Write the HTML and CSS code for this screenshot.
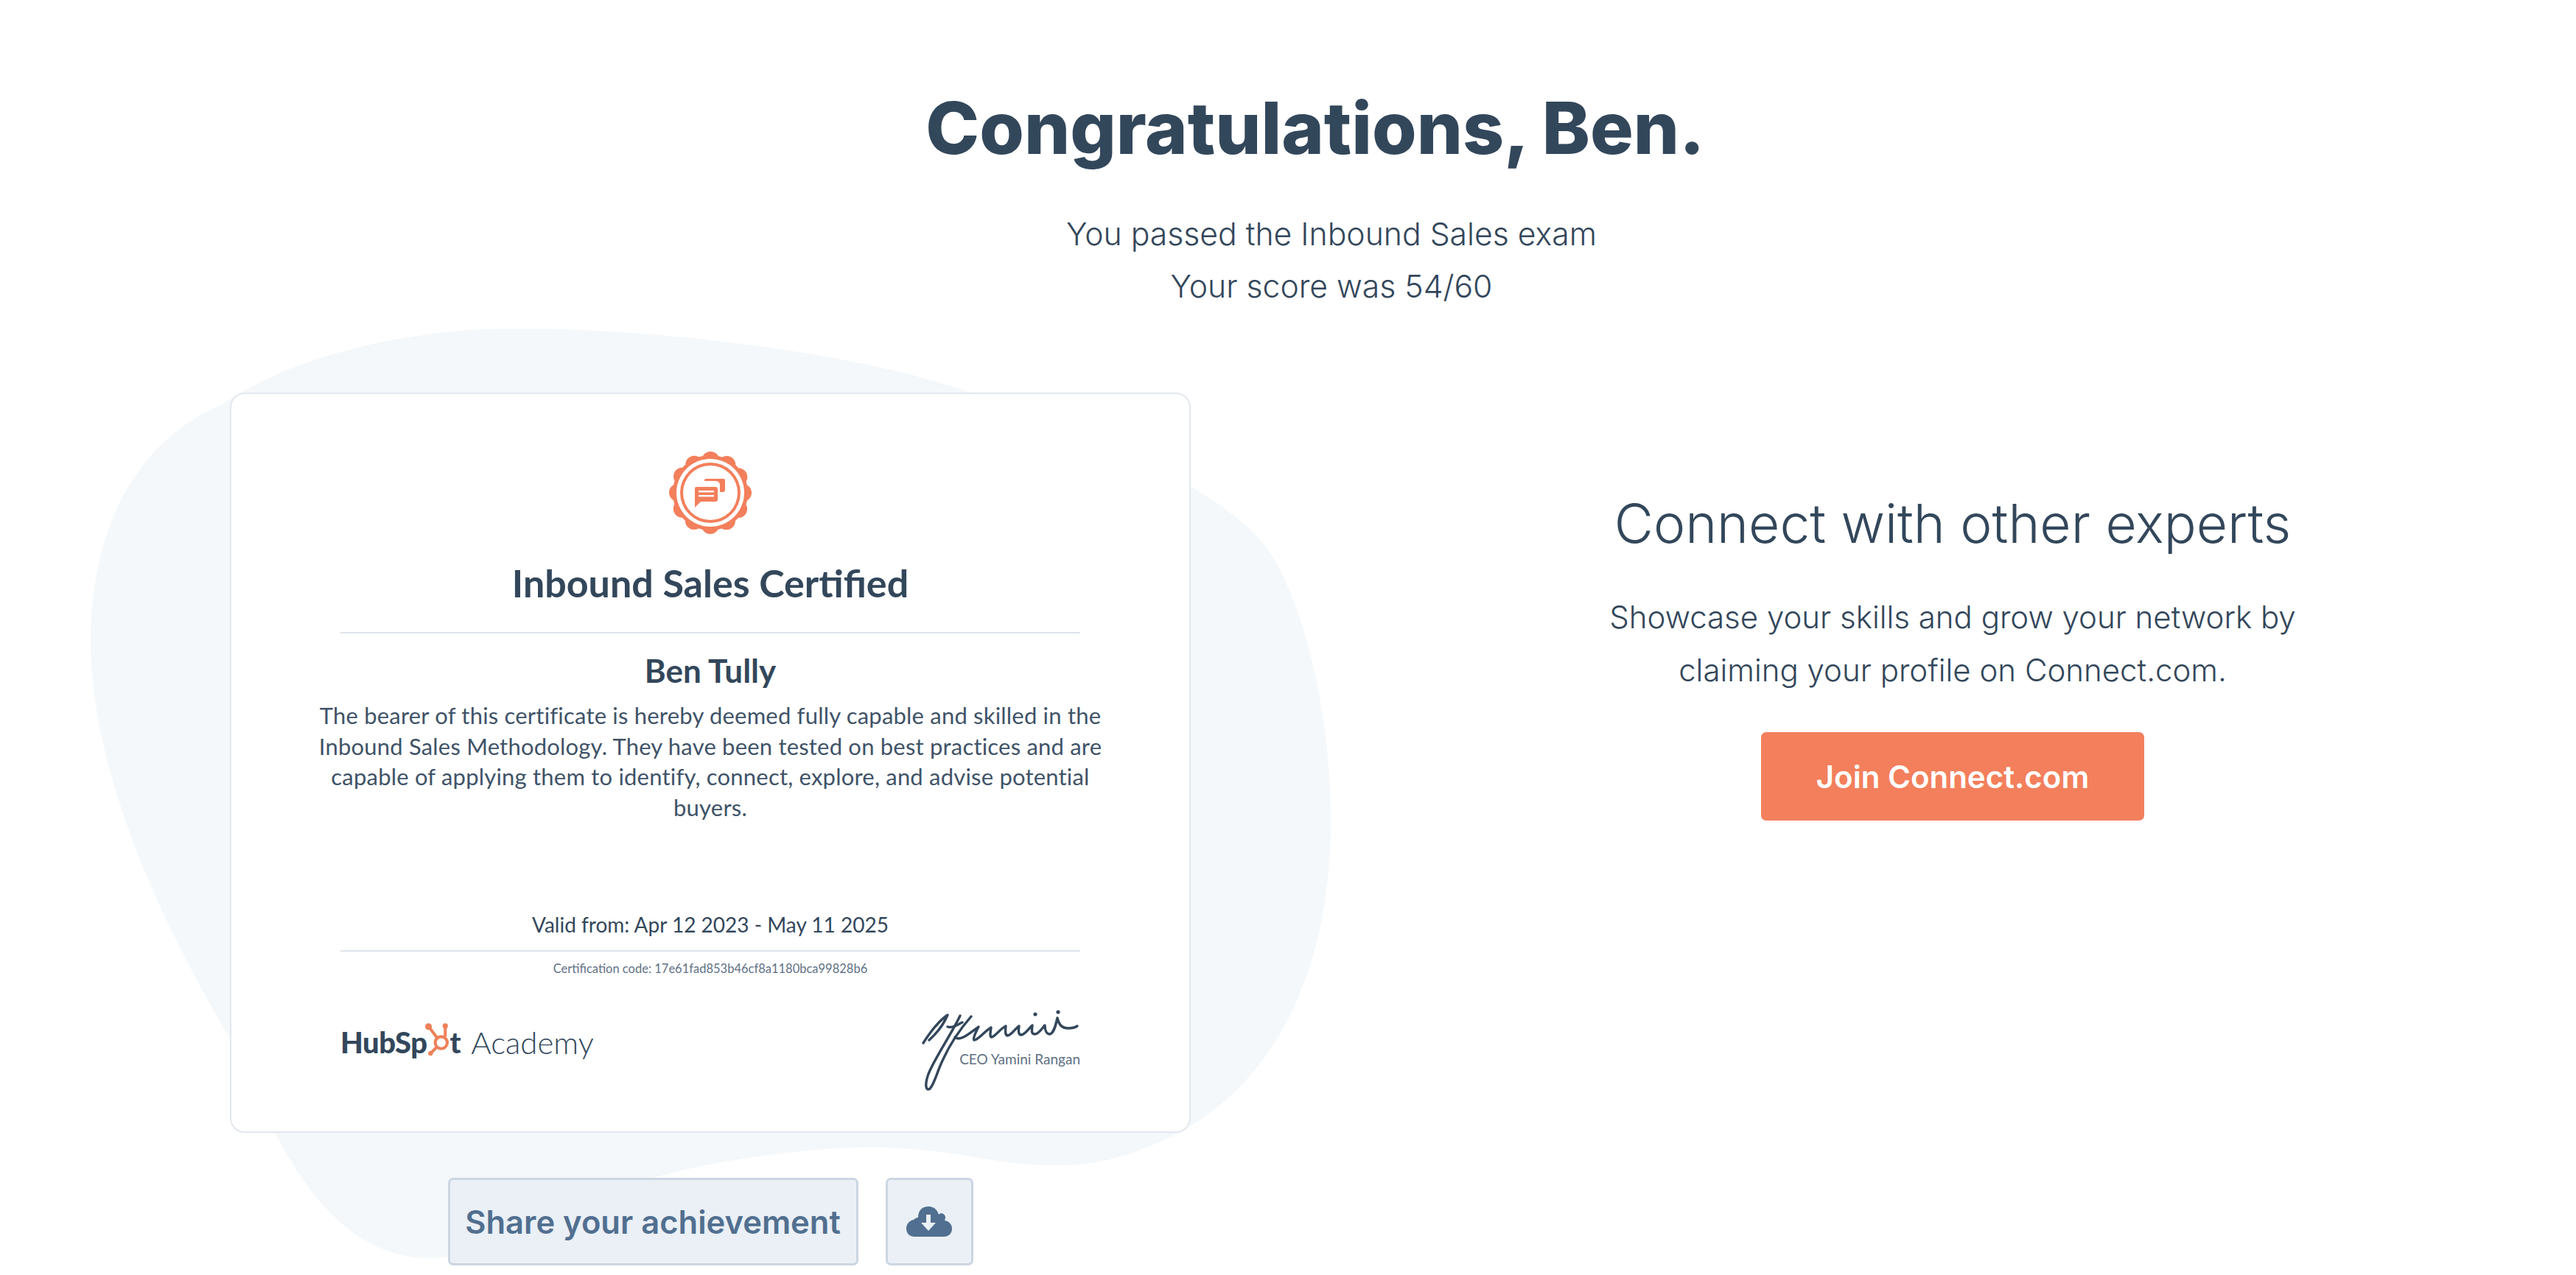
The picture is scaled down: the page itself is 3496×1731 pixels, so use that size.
FILE: index.html
```html
<!DOCTYPE html>
<html lang="en">
<head>
  <meta charset="UTF-8">
  <meta name="viewport" content="width=device-width, initial-scale=1.0">
  <title>Congratulations</title>
  <link rel="stylesheet" href="styles.css">
</head>
<body>
  <!-- mancha de fundo atras do certificado -->
  <svg class="blob" viewBox="0 0 1900 1731" aria-hidden="true">
    <path d="M700 446 C900 446 1170 480 1317 533 C1420 575 1540 615 1616 660 C1680 700 1720 730 1745 790 C1785 880 1806 1000 1806 1115 C1806 1330 1720 1500 1550 1560 C1480 1590 1400 1585 1330 1572 C1260 1560 1200 1555 1137 1559 C1080 1562 970 1575 891 1598 C800 1630 690 1708 582 1708 C470 1708 390 1600 330 1440 C220 1260 123 1050 123 870 C123 700 200 590 300 550 C400 480 560 446 700 446 Z"/>
  </svg>

  <header class="hero">
    <h1>Congratulations, Ben.</h1>
    <p>You passed the Inbound Sales exam</p>
    <p>Your score was 54/60</p>
  </header>

  <main class="columns">
    <section class="cert-col">
      <div class="card">
        <svg class="badge" viewBox="0 0 112 112" aria-hidden="true">
          <circle cx="56" cy="56" r="51" fill="#f37f5c"/>
          <circle class="badge-lobes" cx="56" cy="56" r="44"/>
          <circle cx="56" cy="56" r="46" fill="#fff"/>
          <circle cx="56" cy="56" r="41" fill="#f37f5c"/>
          <circle cx="56" cy="56" r="37" fill="#fff"/>
          <path fill="#f37f5c" d="M50 37 H74 Q76 37 76 39 V52 Q76 55 73 55 H69 V46 Q69 40 63 40 H48 Q48 37 50 37 Z"/>
          <path fill="#f37f5c" d="M37 48 H63 Q66 48 66 51 V65 Q66 68 63 68 H43 L35 76 V50 Q35 48 37 48 Z"/>
          <rect x="40" y="53" width="21" height="2.4" fill="#fff"/>
          <rect x="40" y="59" width="21" height="2.4" fill="#fff"/>
        </svg>
        <h2>Inbound Sales Certified</h2>
        <hr class="rule rule-top">
        <h3>Ben Tully</h3>
        <p class="cert-text">The bearer of this certificate is hereby deemed fully capable and skilled in the Inbound Sales Methodology. They have been tested on best practices and are capable of applying them to identify, connect, explore, and advise potential buyers.</p>
        <p class="valid">Valid from: Apr 12 2023 - May 11 2025</p>
        <hr class="rule rule-bottom">
        <p class="code">Certification code: 17e61fad853b46cf8a1180bca99828b6</p>
        <div class="card-foot">
          <div class="logo">
            <span class="logo-hub">HubSp</span><svg class="sprocket" viewBox="0 0 44 50" aria-hidden="true">
              <g fill="none" stroke="#ee8159" stroke-width="4.5">
                <circle cx="24" cy="30" r="9"/>
                <path d="M30 5 V21 M6 7 L18 23 M17 37 L9 45"/>
              </g>
              <g fill="#ee8159">
                <circle cx="5" cy="6" r="5"/>
                <circle cx="30" cy="5" r="4"/>
                <circle cx="8" cy="46" r="3.5"/>
              </g>
            </svg><span class="logo-hub logo-t">t</span>
            <span class="logo-academy">Academy</span>
          </div>
          <div class="signature">
            <svg viewBox="0 0 260 150" aria-hidden="true">
              <g fill="none" stroke="#33475b" stroke-width="3.4" stroke-linecap="round" stroke-linejoin="round">
                <path d="M25 66 C34 52 46 36 58 28 C52 42 42 54 33 62"/>
                <path d="M75 29 C62 56 42 84 32 108 C27 122 28 132 34 128 C40 122 44 104 52 88 C62 66 76 46 90 30"/>
                <path d="M58 44 C64 46 70 42 78 38"/>
                <path d="M68 58 C74 64 84 56 100 44 C96 52 92 60 94 62 C100 62 108 50 117 45 C116 52 115 58 118 58 C124 56 130 46 137 43 C136 50 136 56 140 56 C146 54 150 46 155 43 C154 50 154 55 158 55 C164 54 168 46 173 42 C172 50 172 54 176 54 C182 54 186 46 190 42 C190 48 192 54 197 54 C203 52 205 40 207 32 C209 40 212 46 222 46 C226 46 231 45 234 43"/>
              </g>
              <circle cx="177" cy="27" r="2.6" fill="#33475b"/>
              <circle cx="208" cy="24" r="2.6" fill="#33475b"/>
            </svg>
            <span class="sig-name">CEO Yamini Rangan</span>
          </div>
        </div>
      </div>
      <div class="cert-actions">
        <button class="btn-soft btn-share">Share your achievement</button>
        <button class="btn-soft btn-download" aria-label="Download">
          <svg viewBox="0 0 62 41" aria-hidden="true">
            <path fill="#516f90" d="M16 15 C16 5 22 0 30 0 C37 0 42 4 44 11 C46 8 52 9 53 14 C53 16 52.500 18 52 19 C58 20 62 24 62 30 C62 37 57 41 51 41 H11 C5 41 0 37 0 30 C0 24 4 19 10 18 C12 16 14 15 16 15 Z"/>
            <path fill="#eaf0f6" d="M27 11 H33 V22 H40 L30 33 L20 22 H27 Z"/>
          </svg>
        </button>
      </div>
    </section>

    <section class="connect">
      <h2>Connect with other experts</h2>
      <p>Showcase your skills and grow your network by claiming your profile on Connect.com.</p>
      <button class="btn-join">Join Connect.com</button>
    </section>
  </main>
</body>
</html>
```

FILE: styles.css
```css
* {
  box-sizing: border-box;
}

body {
  margin: 0;
  height: 1731px;
  overflow: hidden;
  position: relative;
  background: #fff;
  color: #33475b;
  font-family: Inter, "Open Sans", sans-serif;
}

.blob {
  position: absolute;
  top: 0;
  left: 0;
  width: 1900px;
  height: 1731px;
  fill: #f5f8fa;
}

.hero {
  position: relative;
  padding-top: 100px;
  text-align: center;
}

.hero h1 {
  margin: 0 0 34px;
  padding-left: 74px;
  font-size: 98px;
  line-height: 148px;
  font-weight: 800;
}

.hero p {
  margin: 0;
  padding-left: 118px;
  font-size: 42.7px;
  line-height: 71px;
  font-weight: 300;
}

.columns {
  position: relative;
  display: flex;
  padding: 109px 0 0 312px;
}

.cert-col {
  width: 1304px;
}

/* Certificado */
.card {
  height: 1005px;
  padding: 78px 100px 0;
  background: #fff;
  border: 2px solid #e3e7ee;
  border-radius: 20px;
  text-align: center;
  font-family: Lato, sans-serif;
}

.badge {
  display: block;
  width: 112px;
  height: 112px;
  margin: 0 auto;
}

.badge-lobes {
  fill: none;
  stroke: #f37f5c;
  stroke-width: 24;
  stroke-linecap: round;
  stroke-dasharray: 0 23.038;
}

.card h2 {
  margin: 36px 0 0;
  font-size: 52px;
  line-height: 60px;
  font-weight: 700;
}

.rule {
  height: 2px;
  margin: 0 48px;
  border: 0;
  background: #dfe3eb;
}

.rule-top {
  margin-top: 37px;
}

.card h3 {
  margin: 25px 0 0;
  font-size: 44px;
  line-height: 50px;
  font-weight: 700;
}

.cert-text {
  margin: 16px 0 0;
  font-size: 31px;
  line-height: 41.5px;
  letter-spacing: 0.2px;
  color: #3f5368;
}

.valid {
  margin: 118px 0 0;
  font-size: 28px;
  line-height: 40px;
}

.rule-bottom {
  margin-top: 15px;
}

.code {
  margin: 11px 0 0;
  font-size: 16.5px;
  line-height: 24px;
  color: #5f7184;
}

.card-foot {
  display: flex;
  justify-content: space-between;
  align-items: flex-start;
  margin: 46px 48px 0;
}

/* Logo HubSpot Academy */
.logo {
  display: flex;
  align-items: center;
  height: 60px;
  margin-top: 12px;
  white-space: nowrap;
}

.logo-hub {
  font-size: 40px;
  font-weight: 900;
  letter-spacing: -0.5px;
  line-height: 1;
}

.sprocket {
  width: 40px;
  height: 46px;
  margin: -8px -6px 0 -3px;
}

.logo-t {
  margin-right: 14px;
}

.logo-academy {
  font-size: 42px;
  font-weight: 300;
  line-height: 1;
}

.signature {
  position: relative;
  width: 230px;
  height: 110px;
}

.signature svg {
  position: absolute;
  top: -23px;
  right: -22px;
  width: 260px;
  height: 150px;
}

.sig-name {
  position: absolute;
  right: 0;
  top: 53px;
  font-size: 19px;
  line-height: 24px;
  color: #5f7184;
  white-space: nowrap;
}

/* Botoes */
.cert-actions {
  display: flex;
  justify-content: center;
  gap: 37px;
  margin-top: 61px;
}

.btn-soft {
  height: 119px;
  padding: 0;
  background: #eaf0f6;
  border: 3px solid #cbd6e2;
  border-radius: 7px;
  color: #516f90;
  font-family: Inter, sans-serif;
  font-size: 43.5px;
  font-weight: 600;
}

.btn-share {
  width: 557px;
}

.btn-download {
  display: flex;
  align-items: center;
  justify-content: center;
  width: 119px;
}

.btn-download svg {
  width: 62px;
  height: 41px;
}

.connect {
  width: 1332px;
  margin-left: 368px;
  padding-top: 133px;
  text-align: center;
}

.connect h2 {
  margin: 0;
  font-size: 73px;
  line-height: 90px;
  font-weight: 300;
}

.connect p {
  width: 960px;
  margin: 46px auto 0;
  font-size: 42px;
  line-height: 72px;
  font-weight: 300;
}

.btn-join {
  width: 520px;
  height: 120px;
  margin-top: 48px;
  background: #f37f5c;
  border: 0;
  border-radius: 7px;
  color: #fff;
  font-family: Inter, sans-serif;
  font-size: 42px;
  font-weight: 600;
}
```
